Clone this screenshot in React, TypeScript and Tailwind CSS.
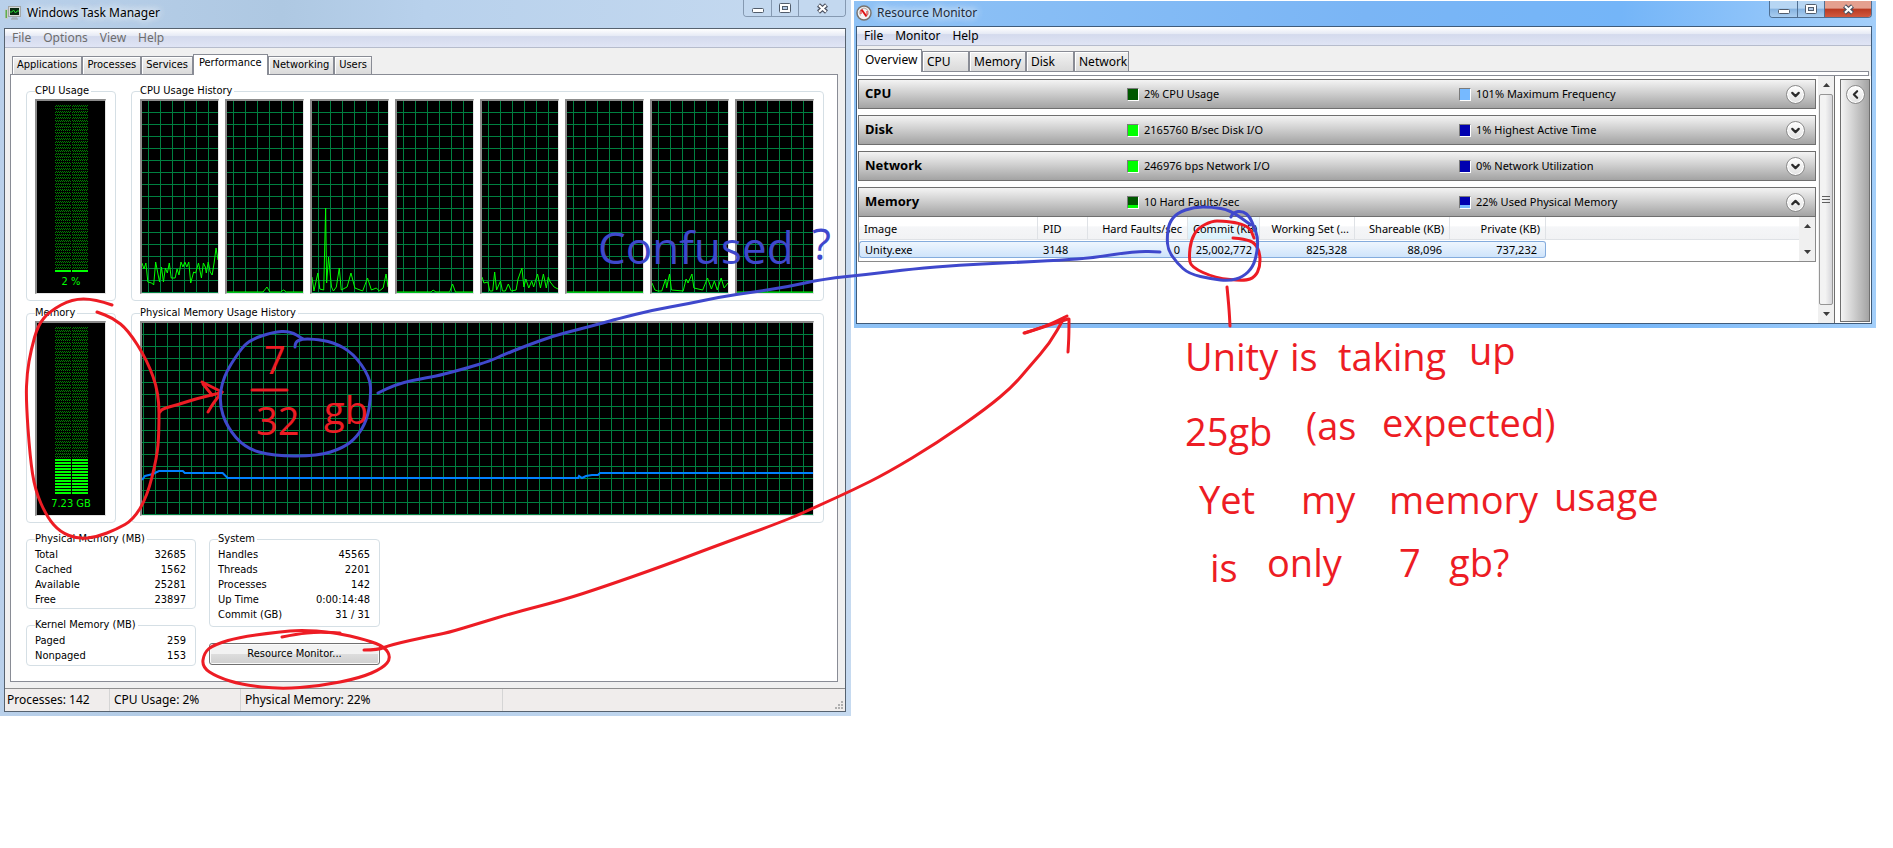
import React from 'react';
import { ChevronDown, ChevronLeft, ChevronUp } from 'lucide-react';

type Point = [number, number];

const cpuCharts = [
  '0,162 2,168 4,162 6,181 10,182 12,184 14,161 16,171 18,181 20,166 22,181 24,167 26,172 28,162 30,177 34,177 36,168 38,174 40,161 42,166 44,161 46,166 48,161 50,182 53,171 55,172 58,162 61,177 63,162 65,166 66,172 68,161 70,171 72,174 74,162 76,147 78,159',
  '0,191 37,191 41,186 44,191 55,191 58,189 61,191 78,191',
  '0,176 2,190 6,172 8,188 12,189 14,107 15,182 17,156 20,186 22,190 25,186 28,167 30,189 36,186 40,172 44,187 52,190 57,177 61,189 66,187 69,190 73,187 76,173 78,186',
  '0,191 35,191 37,189 40,191 54,191 57,183 60,191 78,191',
  '0,176 2,182 6,181 8,190 11,190 13,171 15,189 19,180 21,190 24,190 27,183 30,190 35,189 37,178 41,167 43,186 45,178 48,187 51,180 53,186 57,173 60,187 63,173 66,187 68,176 70,181 74,186 78,188',
  '0,191 78,191',
  '0,182 3,189 6,190 10,190 14,178 15,187 18,173 20,189 32,190 35,178 37,182 41,173 43,187 52,189 57,177 61,188 64,180 67,189 71,177 74,187 78,182',
  '0,191 78,191'
];

const memoryLine =
  '0,157 3,153 11,151 17,148 41,148 43,150 81,150 86,155 438,155 439,153 442,155 446,153 452,152 458,152 460,150 674,150';

const physicalMemory = [
  ['Total', '32685'],
  ['Cached', '1562'],
  ['Available', '25281'],
  ['Free', '23897']
];

const kernelMemory = [
  ['Paged', '259'],
  ['Nonpaged', '153']
];

const systemInfo = [
  ['Handles', '45565'],
  ['Threads', '2201'],
  ['Processes', '142'],
  ['Up Time', '0:00:14:48'],
  ['Commit (GB)', '31 / 31']
];

const swatches = {
  darkGreen: 'bg-[#005800]',
  green: 'bg-[#00ff00]',
  greenLow: 'bg-[linear-gradient(#005800_75%,#00ff00_75%)]',
  lightBlue: 'bg-[#76b9ff]',
  darkBlue: 'bg-[#0000b0]',
  blueLow: 'bg-[linear-gradient(#0000b0_75%,#76b9ff_75%)]'
};

const sections = [
  { name: 'CPU', left: '2% CPU Usage', leftSwatch: swatches.darkGreen, right: '101% Maximum Frequency', rightSwatch: swatches.lightBlue, open: false },
  { name: 'Disk', left: '2165760 B/sec Disk I/O', leftSwatch: swatches.green, right: '1% Highest Active Time', rightSwatch: swatches.darkBlue, open: false },
  { name: 'Network', left: '246976 bps Network I/O', leftSwatch: swatches.green, right: '0% Network Utilization', rightSwatch: swatches.darkBlue, open: false },
  { name: 'Memory', left: '10 Hard Faults/sec', leftSwatch: swatches.greenLow, right: '22% Used Physical Memory', rightSwatch: swatches.blueLow, open: true }
];

const columns = [
  { label: 'Image', value: 'Unity.exe', width: 'w-[179px]', align: 'text-left' },
  { label: 'PID', value: '3148', width: 'w-[50px]', align: 'text-left' },
  { label: 'Hard Faults/sec', value: '0', width: 'w-[100px]', align: 'text-right' },
  { label: 'Commit (KB)', value: '25,002,772', width: 'w-[72px]', align: 'text-right' },
  { label: 'Working Set (...', value: '825,328', width: 'w-[95px]', align: 'text-right' },
  { label: 'Shareable (KB)', value: '88,096', width: 'w-[95px]', align: 'text-right' },
  { label: 'Private (KB)', value: '737,232', width: 'w-[96px]', align: 'text-right' }
];

const TaskManagerIcon = () => (
  <svg width="16" height="14" viewBox="0 0 16 14">
    <rect x="0" y="3" width="3" height="10" fill="#c9ccc9" />
    <rect x="0.5" y="4" width="1.5" height="8" fill="#5fae4f" />
    <rect x="3.5" y="0.5" width="12" height="10" fill="#d8dad8" stroke="#a2a6a6" />
    <rect x="5" y="2" width="9" height="7" fill="#0c2a12" />
    <path d="M5 6h2l1.500-2 2 3 1.500-2h2" fill="none" stroke="#27d02f" />
    <path d="M7 12h5M6 13h7" stroke="#9a9e9e" />
  </svg>
);

const ResourceMonitorIcon = () => (
  <svg width="16" height="16" viewBox="0 0 16 16">
    <circle cx="8" cy="8" r="7" fill="#f4f4f4" stroke="#77736f" strokeWidth="1.500" />
    <path d="M4.500 10.500a4.500 4.500 0 1 1 7 0" fill="none" stroke="#b5a8a4" />
    <path d="M5.500 4.500l5 7" stroke="#dd1111" strokeWidth="2" />
    <path d="M5 5v4M11 6v4" stroke="#dd1111" />
  </svg>
);

const WindowButtons: React.FC<{ active?: boolean }> = ({ active }) => {
  const line = active ? 'border-[#4f6f92]' : 'border-[#8599b1]';
  const close = active
    ? 'bg-[linear-gradient(#e4a08f_45%,#b93a22_50%,#d2593f)]'
    : 'bg-[#c3d8ef]';
  const plain = active ? 'bg-[linear-gradient(#b7d6f3_45%,#86b3e0_50%,#a9cdf0)]' : 'bg-[#c3d8ef]';

  return (
    <div className={`flex h-[17px] rounded-b border border-t-0 ${line} overflow-hidden`}>
      <button aria-label="Minimize" className={`flex w-7 items-center justify-center border-r ${line} ${plain}`}>
        <svg width="12" height="10"><rect x="0.5" y="5.500" width="11" height="4" rx="1" fill="#fff" stroke="#515c6b" /></svg>
      </button>
      <button aria-label="Maximize" className={`flex w-[27px] items-center justify-center border-r ${line} ${plain}`}>
        <svg width="12" height="10">
          <rect x="0.5" y="0.5" width="11" height="9" rx="1" fill="#fff" stroke="#515c6b" />
          <rect x="3.500" y="3.500" width="5" height="3" fill="#b3cae6" stroke="#515c6b" />
        </svg>
      </button>
      <button aria-label="Close" className={`flex w-[46px] items-center justify-center ${close}`}>
        <svg width="13" height="11" viewBox="0 0 13 11">
          <path d="M2.500 2l8 7M10.500 2l-8 7" stroke="#4c5261" strokeWidth="4.500" />
          <path d="M3 2.200l7 6.600M10 2.200l-7 6.600" stroke="#fff" strokeWidth="2.200" />
        </svg>
      </button>
    </div>
  );
};

const MenuBar: React.FC<{ items: string[]; color: string }> = ({ items, color }) => (
  <nav className={`flex h-[19px] items-center gap-3 border-b border-[#b6bccc] bg-[linear-gradient(#ffffff,#e6eaf5_38%,#d4daed_42%,#e0e5f5)] px-[7px] text-xs ${color}`}>
    {items.map(item => (
      <button key={item}>{item}</button>
    ))}
  </nav>
);

const Group: React.FC<{ title: string; className?: string; children: React.ReactNode }> = ({ title, className, children }) => (
  <fieldset className={`min-w-0 rounded border border-[#d5dfe5] pr-[9px] pl-2 ${className ?? ''}`}>
    <legend className="pr-0.5 leading-4">{title}</legend>
    {children}
  </fieldset>
);

const sunken = 'border-l-2 border-t-2 border-r border-b border-l-[#8c8c8c] border-t-[#8c8c8c] border-r-[#e3e3e3] border-b-[#e3e3e3]';
const grid = 'bg-black bg-[linear-gradient(#008040_1px,transparent_1px),linear-gradient(90deg,#008040_1px,transparent_1px)] bg-[size:12px_12px]';

const Meter: React.FC<{ lit: string; label: string }> = ({ lit, label }) => (
  <div className={`flex h-[195px] flex-col items-center bg-black pt-1 ${sunken}`}>
    <div className="grid h-[167px] grid-cols-2 gap-px">
      {[0, 1].map(i => (
        <div key={i} className="flex w-4 flex-col">
          <div className="flex-1 bg-[repeating-linear-gradient(transparent_0_2px,#000_2px_3px),conic-gradient(#008000_25%,#000_25%_50%,#008000_50%_75%,#000_75%)] bg-[size:auto,2px_2px]" />
          <div className={`bg-[repeating-linear-gradient(#00ff00_0_2px,#000_2px_3px)] ${lit}`} />
        </div>
      ))}
    </div>
    <span className="mt-0.5 text-[#00ff00] leading-4">{label}</span>
  </div>
);

const Chart: React.FC<{ points: string; wide?: boolean }> = ({ points, wide }) => (
  <div className={`h-[195px] min-w-0 ${grid} ${sunken} ${wide ? 'bg-[position:1px_11px]' : 'bg-[position:6px_11px]'}`}>
    <svg className="block h-full w-full" viewBox={wide ? '0 0 674 192' : '0 0 78 192'} preserveAspectRatio="none">
      <polyline
        points={points}
        fill="none"
        stroke={wide ? '#0080ff' : '#00ff00'}
        strokeWidth={wide ? 2 : 1}
        vectorEffect="non-scaling-stroke"
      />
    </svg>
  </div>
);

const Readings: React.FC<{ rows: string[][] }> = ({ rows }) => (
  <dl className="leading-[15px]">
    {rows.map(([name, value]) => (
      <div key={name} className="flex justify-between">
        <dt>{name}</dt>
        <dd>{value}</dd>
      </div>
    ))}
  </dl>
);

const TaskManager = () => {
  const tabs = ['Applications', 'Processes', 'Services', 'Performance', 'Networking', 'Users'];

  return (
    <section className="min-w-0 bg-[linear-gradient(90deg,#b9d0ea,#aec8e2_33%,#b8d1ec_50%,#c6daf0)] px-1 pr-[5px] pb-1 text-[11px]">
      <header className="flex h-7 items-start justify-between pl-px">
        <h1 className="flex h-[26px] items-center gap-1.5 font-['Noto_Sans',sans-serif] text-xs text-black [text-shadow:0_0_8px_#fff,0_0_8px_#fff]">
          <TaskManagerIcon />
          Windows Task Manager
        </h1>
        <WindowButtons />
      </header>

      <div className="border border-[#56626f] bg-[#f0f0f0]">
        <MenuBar items={['File', 'Options', 'View', 'Help']} color="font-['Noto_Sans',sans-serif] text-[#6d6d6d]" />

        <div className="px-[5px] pt-[6px] pr-[7px] pb-[6px]">
          <div role="tablist" className="flex h-5 items-end pl-0.5">
            {tabs.map(tab => (
              <button
                key={tab}
                role="tab"
                aria-selected={tab === 'Performance'}
                className={
                  tab === 'Performance'
                    ? 'relative top-px h-[21px] border border-b-0 border-[#898c95] bg-white px-[5px] pb-1'
                    : 'h-[18px] border border-b-0 border-[#898c95] bg-[linear-gradient(#f2f2f2,#dadada)] px-1 shadow-[inset_1px_1px_#fff]'
                }
              >
                {tab}
              </button>
            ))}
          </div>

          <div className="border border-[#898c95] bg-white pt-2 pr-[13px] pb-[15px] pl-[15px]">
            <div className="grid grid-cols-[90px_1fr] gap-x-[15px] gap-y-1">
              <Group title="CPU Usage" className="pb-1.5">
                <Meter label="2 %" lit="h-0.5" />
              </Group>
              <Group title="CPU Usage History" className="pb-1.5">
                <div className="grid grid-cols-8 gap-1.5">
                  {cpuCharts.map((points, i) => (
                    <Chart key={i} points={points} />
                  ))}
                </div>
              </Group>
              <Group title="Memory" className="pb-1.5">
                <Meter label="7.23 GB" lit="h-[35px]" />
              </Group>
              <Group title="Physical Memory Usage History" className="pb-1.5">
                <Chart points={memoryLine} wide />
              </Group>
            </div>

            <div className="mt-2 grid grid-cols-[170px_171px] gap-x-[13px]">
              <div className="flex flex-col gap-2">
                <Group title="Physical Memory (MB)" className="pb-px">
                  <Readings rows={physicalMemory} />
                </Group>
                <Group title="Kernel Memory (MB)" className="pb-0.5">
                  <Readings rows={kernelMemory} />
                </Group>
              </div>
              <div className="flex flex-col gap-4">
                <Group title="System" className="pb-1">
                  <Readings rows={systemInfo} />
                </Group>
                <button className="h-[22px] rounded-[3px] border border-[#707070] bg-[linear-gradient(#f2f2f2_50%,#dddddd_50%,#cfcfcf)] shadow-[inset_0_0_0_1px_#fafafa]">
                  Resource Monitor...
                </button>
              </div>
            </div>
          </div>
        </div>

        <footer className="flex h-[23px] items-stretch border-t border-[#8e8e8e] bg-[#f0edec] text-xs leading-[22px] font-['Noto_Sans',sans-serif]">
          <span className="w-[105px] border-r border-[#d5d5d5] pl-0.5">Processes: 142</span>
          <span className="w-[131px] border-r border-[#d5d5d5] pl-1">CPU Usage: 2%</span>
          <span className="w-[262px] border-r border-[#d5d5d5] pl-1">Physical Memory: 22%</span>
          <svg className="mt-auto mr-0.5 mb-0.5 ml-auto" width="8" height="8" fill="#b0b0b0">
            <path d="M6 0h2v2h-2zM3 3h2v2h-2zM6 3h2v2h-2zM0 6h2v2h-2zM3 6h2v2h-2zM6 6h2v2h-2z" />
          </svg>
        </footer>
      </div>
    </section>
  );
};

const Swatch: React.FC<{ fill: string }> = ({ fill }) => (
  <span className={`h-[13px] w-3 border border-t-[#7a7a7a] border-l-[#7a7a7a] border-r-white border-b-white ${fill}`} />
);

const Arrow: React.FC<{ down?: boolean }> = ({ down }) => (
  <svg width="7" height="4" viewBox="0 0 7 4" fill="#3c3c3c">
    <path d={down ? 'M0 0h7L3.500 4z' : 'M0 4h7L3.500 0z'} />
  </svg>
);

const round = 'flex size-[19px] items-center justify-center rounded-full border border-[#8a8a8a] bg-[linear-gradient(#ffffff,#e2e2e2)] text-[#2b2b2b] shadow-[inset_0_0_0_1px_#fff]';

const MemoryTable = () => (
  <div className="flex border border-t-0 border-[#8a8a8a] bg-white text-[11px]">
    <div className="min-w-0 flex-1 pb-[3px]">
      <table className="w-full table-fixed border-separate border-spacing-0 whitespace-nowrap">
        <thead>
          <tr className="h-[23px] bg-[linear-gradient(#ffffff_40%,#f5f6f8_42%,#f1f2f4)]">
            {columns.map(col => (
              <th
                key={col.label}
                className={`border-r border-b border-[#dfe2e6] px-[5px] pt-0.5 font-normal ${col.width} ${col.align} ${
                  col.label === 'Commit (KB)' ? 'bg-[linear-gradient(#f3fbff,#d9f0fb)]' : ''
                }`}
              >
                {col.label}
              </th>
            ))}
            <th className="border-b border-[#dfe2e6]" />
          </tr>
        </thead>
        <tbody>
          <tr>
            <td colSpan={8} className="h-px" />
          </tr>
          <tr className="h-[17px] leading-[15px]">
            {columns.map(col => (
              <td
                key={col.label}
                className={`border-y border-[#84acdd] bg-[linear-gradient(#eef6fe,#cfe4fb)] pr-2 pl-[5px] ${col.align} first:rounded-l-[3px] first:border-l nth-[7]:rounded-r-[3px] nth-[7]:border-r`}
              >
                {col.value}
              </td>
            ))}
            <td />
          </tr>
        </tbody>
      </table>
    </div>
    <div className="flex w-4 flex-col items-center justify-between bg-[#f0f0f0] py-[7px]">
      <Arrow />
      <Arrow down />
    </div>
  </div>
);

const ResourceMonitor = () => {
  const tabs = [
    { name: 'Overview', width: 'w-16' },
    { name: 'CPU', width: 'w-[47px]' },
    { name: 'Memory', width: 'w-[57px]' },
    { name: 'Disk', width: 'w-12' },
    { name: 'Network', width: 'w-[55px]' }
  ];

  return (
    <section className="mt-px min-w-0 self-start bg-[linear-gradient(90deg,#8fc2f5,#7ab5f5_50%,#74b5f8_75%,#a4cffa)] px-0.5 pr-1 pb-1 text-xs">
      <header className="flex h-[25px] items-start justify-between">
        <h1 className="flex h-[23px] items-center gap-[5px] text-[#1f2c3a] [text-shadow:0_0_8px_#fff,0_0_8px_#fff]">
          <ResourceMonitorIcon />
          Resource Monitor
        </h1>
        <WindowButtons active />
      </header>

      <div className="border border-[#3f5b7a] bg-white">
        <MenuBar items={['File', 'Monitor', 'Help']} color="text-black" />

        <div className="bg-[#f0f0f0] pt-[3px] pr-[2px] pl-px">
          <div role="tablist" className="flex h-[22px] items-end">
            {tabs.map(tab => (
              <button
                key={tab.name}
                role="tab"
                aria-selected={tab.name === 'Overview'}
                className={`border border-b-0 border-[#898c95] text-left whitespace-nowrap ${tab.width} ${
                  tab.name === 'Overview'
                    ? 'relative top-px h-[23px] bg-white pl-1.5 pb-0.5'
                    : 'h-5 bg-[linear-gradient(#f2f2f2,#dadada)] pl-1 shadow-[inset_1px_1px_#fff]'
                }`}
              >
                {tab.name}
              </button>
            ))}
          </div>
          <div className="h-[5px] border border-[#898c95] bg-white" />
        </div>

        <div className="flex min-h-[247px] pl-px">
          <div className="min-w-0 flex-1 pt-[3px] pr-0.5">
            <div className="flex flex-col gap-1.5">
              {sections.map(s => (
                <div
                  key={s.name}
                  className="grid h-[30px] grid-cols-[268fr_332fr_356fr] items-center border border-[#6f6f6f] bg-[linear-gradient(#f4f4f4,#d0d0d0_45%,#a3a3a3)] text-[11px]"
                >
                  <h2 className="pl-1.5 text-[13px] font-bold">{s.name}</h2>
                  <div className="flex items-center gap-[5px]">
                    <Swatch fill={s.leftSwatch} />
                    {s.left}
                  </div>
                  <div className="flex items-center gap-[5px]">
                    <Swatch fill={s.rightSwatch} />
                    {s.right}
                    <button aria-label={`Toggle ${s.name}`} className={`mr-2.5 ml-auto ${round}`}>
                      {s.open ? <ChevronUp size={13} strokeWidth={4} /> : <ChevronDown size={13} strokeWidth={4} />}
                    </button>
                  </div>
                </div>
              ))}
            </div>
            <MemoryTable />
          </div>

          <div className="flex w-[17px] flex-col items-center border-r border-[#6f6f6f] bg-[#f0f0f0]">
            <div className="flex h-[18px] items-center">
              <Arrow />
            </div>
            <div className="flex w-3.5 flex-1 items-center justify-center rounded-xs border border-[#959595] bg-[linear-gradient(90deg,#f3f3f3_45%,#d6d6da)]">
              <svg width="8" height="8" stroke="#5f5f5f">
                <path d="M0 0.500h8M0 3.500h8M0 6.500h8" />
              </svg>
            </div>
            <div className="flex h-[18px] items-center">
              <Arrow down />
            </div>
          </div>

          <div className="mt-[3px] mr-px mb-px ml-[5px] flex w-[30px] items-start justify-center border border-[#6f6f6f] bg-[linear-gradient(90deg,#f4f4f4,#d0d0d0_45%,#a3a3a3)] pt-[5px]">
            <button aria-label="Show graphs" className={round}>
              <ChevronLeft size={13} strokeWidth={4} />
            </button>
          </div>
        </div>
      </div>
    </section>
  );
};

// Rounds a hand-drawn run of points by curving through the segment midpoints
const smooth = (points: Point[]) => {
  const [first, ...rest] = points;
  let d = `M${first[0]} ${first[1]}`;
  rest.forEach(([x, y], i) => {
    const next = rest[i + 1];
    d += next ? `Q${x} ${y} ${(x + next[0]) / 2} ${(y + next[1]) / 2}` : `L${x} ${y}`;
  });
  return d;
};

const redStrokes: Point[][] = [
  // ring round the memory meter and its arrow
  [[112, 305], [95, 299], [72, 299], [50, 311], [38, 325], [31, 350], [27, 373], [26, 400], [30, 457], [35, 490], [47, 517], [60, 532], [78, 539], [97, 537], [117, 529], [133, 520], [147, 497], [157, 457], [159, 433], [159, 393], [147, 360], [128, 330], [113, 318], [97, 312]],
  [[160, 412], [161, 409], [177, 405], [195, 399], [220, 393]],
  [[202, 382], [222, 392]],
  [[203, 384], [212, 395]],
  [[222, 392], [214, 402], [208, 412]],
  [[252, 390], [287, 390]],
  // ring round the commit value
  [[1233, 238], [1245, 239], [1255, 243], [1260, 253], [1260, 267], [1255, 277], [1245, 281], [1215, 278], [1191, 267], [1189, 257], [1191, 240], [1198, 228], [1212, 221], [1222, 221], [1239, 223], [1250, 228], [1254, 238]],
  [[1227, 287], [1229, 307], [1230, 326]],
  // ring round the button
  [[282, 637], [297, 634], [317, 632], [340, 633]],
  [[280, 632], [243, 636], [213, 645], [204, 653], [202, 667], [217, 677], [243, 685], [280, 689], [320, 686], [360, 678], [383, 668], [391, 658], [385, 647], [367, 640], [333, 632], [300, 630], [280, 632]],
  // long arrow to the second window
  [[364, 650], [378, 650], [390, 645], [430, 636], [447, 633], [480, 623], [513, 613], [563, 600], [603, 587], [663, 566], [713, 547], [787, 520], [820, 505], [853, 490], [887, 473], [937, 443], [987, 408], [1013, 386], [1030, 366], [1050, 343], [1064, 318]],
  [[1024, 333], [1042, 328], [1067, 316]],
  [[1025, 333], [1068, 319]],
  [[1069, 319], [1069, 335], [1068, 352]]
];

const blueStrokes: Point[][] = [
  [[295, 347], [295, 342], [302, 339], [313, 339], [333, 342], [353, 353], [370, 377], [371, 397], [367, 420], [357, 437], [343, 448], [318, 456], [273, 456], [245, 448], [227, 427], [219, 403], [223, 377], [240, 350], [250, 340], [273, 332], [290, 331], [303, 339]],
  [[378, 393], [395, 384], [430, 377], [437, 376], [467, 368], [490, 361], [503, 355], [523, 347], [553, 336], [580, 329], [603, 323], [617, 319], [653, 310], [687, 304], [720, 297], [753, 292], [787, 287], [823, 279], [871, 274], [912, 269], [960, 265], [1005, 263], [1063, 260], [1091, 258], [1137, 251], [1160, 252]],
  [[1231, 217], [1233, 212], [1243, 211], [1250, 217], [1254, 227], [1258, 238], [1257, 253], [1253, 267], [1243, 277], [1229, 281], [1212, 279], [1189, 274], [1177, 263], [1168, 250], [1167, 237], [1169, 223], [1177, 213], [1194, 207], [1212, 207], [1230, 210], [1251, 225]]
];

const redNotes = [
  { text: 'Unity', x: 1185, y: 371 },
  { text: 'is', x: 1290, y: 371 },
  { text: 'taking', x: 1338, y: 371 },
  { text: 'up', x: 1469, y: 365 },
  { text: '25gb', x: 1185, y: 446 },
  { text: '(as', x: 1306, y: 440 },
  { text: 'expected)', x: 1382, y: 437 },
  { text: 'Yet', x: 1199, y: 514 },
  { text: 'my', x: 1301, y: 514 },
  { text: 'memory', x: 1389, y: 514 },
  { text: 'usage', x: 1554, y: 511 },
  { text: 'is', x: 1210, y: 582 },
  { text: 'only', x: 1267, y: 577 },
  { text: '7', x: 1399, y: 577 },
  { text: 'gb?', x: 1449, y: 577 },
  { text: '7', x: 264, y: 374 },
  { text: '32', x: 256, y: 435 },
  { text: 'gb', x: 324, y: 424 }
];

const Annotations = () => (
  <svg className="pointer-events-none absolute top-0 left-0 w-full font-['Open_Sans',sans-serif]" viewBox="0 0 1893 848">
    <g fill="none" strokeWidth="3" strokeLinecap="round" strokeLinejoin="round">
      {redStrokes.map((points, i) => (
        <path key={i} d={smooth(points)} stroke="#ed1c24" />
      ))}
      {blueStrokes.map((points, i) => (
        <path key={i} d={smooth(points)} stroke="#3f48cc" />
      ))}
    </g>
    <g fill="#ed1c24" fontSize="38">
      {redNotes.map(note => (
        <text key={`${note.x}-${note.y}`} x={note.x} y={note.y}>
          {note.text}
        </text>
      ))}
    </g>
    <g fill="#3f48cc" fontSize="44">
      <text x="598" y="264">Confused</text>
      <text x="812" y="260">?</text>
    </g>
  </svg>
);

export default function App() {
  return (
    <main className="relative min-h-screen bg-white pr-[17px] font-['Noto_Sans',sans-serif] text-black">
      <div className="grid grid-cols-[851fr_1022fr] gap-[3px]">
        <div className="font-['DejaVu_Sans_Condensed','DejaVu_Sans',sans-serif]">
          <TaskManager />
        </div>
        <ResourceMonitor />
      </div>
      <Annotations />
    </main>
  );
}
